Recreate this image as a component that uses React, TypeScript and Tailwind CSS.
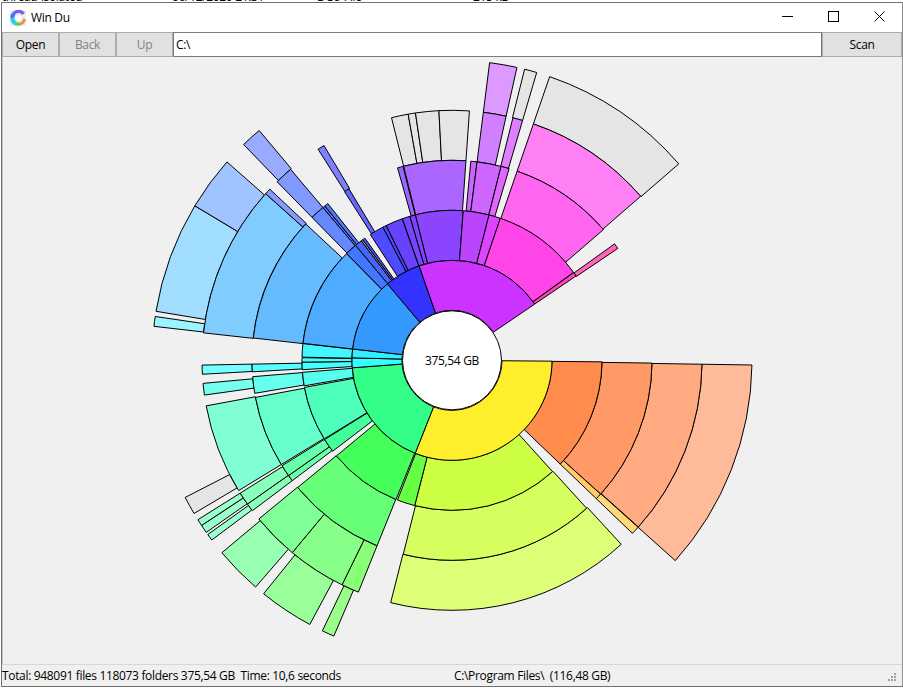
import React from 'react';

const CX = 452;
const CY = 360.3;

const pt = (r: number, a: number) => {
  const t = (a * Math.PI) / 180;
  return `${(CX + r * Math.cos(t)).toFixed(2)} ${(CY + r * Math.sin(t)).toFixed(2)}`;
};

// ring 0 = 50-100px, each ring is 50px wide. angles clockwise from east
const segPath = (ring: number, a0: number, a1: number) => {
  const r0 = 50 + ring * 50;
  const r1 = r0 + 50;
  return `M${pt(r0, a0)} L${pt(r1, a0)} A${r1} ${r1} 0 0 1 ${pt(r1, a1)} L${pt(r0, a1)} A${r0} ${r0} 0 0 0 ${pt(r0, a0)} Z`;
};

const GRAY = '#e5e5e5';

const segments: [number, number, number, string][] = [
  // orange, right side
  [4, 0.9, 41.9, '#ffbb99'],
  [3, 0.9, 41.8, '#ffaa80'],
  [2, 0.8, 42, '#ff9966'],
  [1, 0.6, 43.8, '#ff8c4d'],
  [2, 42, 43.8, '#ffcc66'],
  [3, 41.9, 43.8, '#ffd877'],
  // yellow green
  [3, 47.4, 104.2, '#ddff77'],
  [2, 47.7, 104.1, '#d4ff5e'],
  [1, 47.9, 104.4, '#ccff44'],
  [1, 104.4, 111.3, '#66ff44'],
  // green
  [4, 113.2, 115.6, '#99ff88'],
  [4, 118.3, 128.9, '#99ff99'],
  [4, 130.9, 140.1, '#99ffb3'],
  [3, 112, 116.1, '#88ff77'],
  [3, 116.1, 129.7, '#88ff88'],
  [3, 129.7, 140.6, '#80ff99'],
  [2, 112, 140.5, '#66ff77'],
  [1, 111.9, 140.4, '#44ff5a'],
  // teal slices
  [4, 143.2, 144.5, '#99ffcc'],
  [4, 145, 146.6, '#99ffcc'],
  [4, 146.6, 147.9, '#99ffcc'],
  [3, 143, 144.9, '#88ffbb'],
  [3, 144.9, 147.9, '#88ffbb'],
  [2, 143, 144.8, '#66ffaa'],
  [2, 144.8, 148.2, '#66ffaa'],
  [1, 142.7, 148.1, '#44ff99'],
  [4, 149.3, 152.8, GRAY],
  [3, 148.6, 169.5, '#80ffd5'],
  [2, 148.6, 169.3, '#66ffcc'],
  [1, 148.4, 169.6, '#4dffbb'],
  [3, 172, 174.7, '#77ffee'],
  [2, 170.5, 175.3, '#66ffee'],
  [1, 170.2, 175.4, '#55ffee'],
  // cyan
  [3, 176.8, 178.9, '#77ffff'],
  [2, 176.7, 178.9, '#55ffff'],
  [1, 176.4, 179.3, '#44ffff'],
  [1, 179.3, 181, '#44ffff'],
  [1, 181.2, 186.4, '#44f5ff'],
  // blue
  [4, 186.5, 188.4, '#99f5ff'],
  [4, 189.4, 211, '#a0ddff'],
  [4, 211, 221.4, '#a0c4ff'],
  [3, 186.3, 221.8, '#80ccff'],
  [3, 221.8, 223.2, '#8899ff'],
  [2, 186.4, 223, '#66bbff'],
  [1, 186.5, 225.3, '#4dacff'],
  [4, 226, 230, '#99aaff'],
  [3, 225.6, 229.8, '#8099ff'],
  [2, 225.6, 229.8, '#6688ff'],
  [2, 229.8, 230.5, '#5577ff'],
  [2, 230.5, 231.6, '#5577ff'],
  [1, 225.4, 230, '#4477ff'],
  [1, 230, 232.8, '#4466ff'],
  [1, 232.8, 233.5, '#a8a8a8'],
  [1, 233.5, 234.5, '#4455ff'],
  [3, 237.6, 239.2, '#8080ff'],
  [2, 237.5, 239, '#6666ff'],
  [1, 237, 242.6, '#4d4dff'],
  [1, 242.6, 244, '#5544ff'],
  [1, 244, 250.6, '#6644ff'],
  [1, 250.7, 253.7, '#7744ff'],
  [1, 253.7, 255.9, '#7f44ff'],
  // purple
  [3, 256, 259.9, GRAY],
  [3, 259.9, 261.6, GRAY],
  [3, 261.6, 267, GRAY],
  [3, 267, 274, GRAY],
  [2, 254.2, 255.8, '#9966ff'],
  [2, 256, 274, '#aa66ff'],
  [1, 255.9, 274.3, '#8c44ff'],
  [4, 277.2, 282.5, '#dd99ff'],
  [3, 277.2, 282.5, '#d080ff'],
  [2, 275.4, 277.2, '#c866ff'],
  [2, 277.2, 284.2, '#cc66ff'],
  [1, 274.3, 284.3, '#bb44ff'],
  [4, 284, 286.4, GRAY],
  [3, 284.1, 286.4, '#dd80ff'],
  [2, 284.2, 286.6, '#e066ff'],
  [1, 284.3, 288.8, '#dd44ff'],
  // magenta
  [4, 289, 319.1, GRAY],
  [3, 289, 319, '#ff80f5'],
  [2, 289, 319.2, '#ff66f0'],
  [1, 288.8, 324.1, '#ff44e8'],
  [2, 324.4, 326, '#ff66bb'],
  [1, 324.2, 325.8, '#ff44bb'],
  // first ring
  [0, 0.5, 111.6, '#ffee2b'],
  [0, 111.6, 175.7, '#33ff88'],
  [0, 175.7, 181.4, '#33ffff'],
  [0, 181.4, 186.5, '#33eeff'],
  [0, 186.5, 229.8, '#3399ff'],
  [0, 229.8, 250.8, '#3333ff'],
  [0, 250.8, 325.8, '#cc33ff'],
];

const AppIcon = () => (
  <svg width="16" height="16" viewBox="0 0 16 16" fill="none">
    <rect width="16" height="16" fill="#ececf0" />
    <path d="M4 3.4A6 6 0 0 1 13.5 4" stroke="#7a5cf0" strokeWidth="3.4" />
    <path d="M4 3.4A6 6 0 0 0 2.4 8" stroke="#3a78f0" strokeWidth="4" />
    <path d="M2.4 8A6 6 0 0 0 5.5 13.4" stroke="#22d0e8" strokeWidth="4" />
    <path d="M5.5 13.4A6 6 0 0 0 10 14" stroke="#5ccc50" strokeWidth="3.2" />
    <path d="M10 14A6 6 0 0 0 14.5 9" stroke="#f09030" strokeWidth="2.8" />
    <rect x="6.5" y="6" width="5" height="4.5" fill="#ffffff" />
  </svg>
);

const ToolButton = ({ label, disabled, className }: { label: string; disabled?: boolean; className: string }) => (
  <button
    className={`h-[25px] bg-[#e1e1e1] border border-[#adadad] text-xs ${disabled ? 'text-[#838383]' : 'text-black'} ${className}`}
  >
    {label}
  </button>
);

const App: React.FC = () => {
  return (
    <div className="w-[903px] h-[688px] flex flex-col bg-white overflow-hidden font-['Open_Sans',sans-serif] text-xs tracking-[-0.33px] text-black">
      {/* what is left of the window behind */}
      <div className="h-[2px] shrink-0 overflow-hidden flex text-xs leading-none whitespace-nowrap">
        <span className="ml-[2px] w-[170px] -mt-[9px]">thread-isolated</span>
        <span className="w-[145px] -mt-[9px]">06/12/2020 21:31</span>
        <span className="w-[156px] -mt-[9px]">DCU File</span>
        <span className="-mt-[9px]">215 kB</span>
      </div>

      <div className="ml-[1px] w-[902px] h-[685px] flex flex-col border border-[#707070] border-r-[#909090] bg-white">
        {/* Title bar */}
        <div className="h-[29px] flex items-center pl-[8px] shrink-0">
          <AppIcon />
          <span className="ml-[5px] text-xs">Win Du</span>
          <div className="ml-auto flex items-center pb-[2px]">
            <div className="w-[46px] flex justify-center">
              <svg width="11" height="11" viewBox="0 0 11 11" shapeRendering="crispEdges"><rect x="0" y="5" width="11" height="1" fill="#000" /></svg>
            </div>
            <div className="w-[46px] flex justify-center">
              <svg width="11" height="11" viewBox="0 0 11 11" shapeRendering="crispEdges" fill="none"><rect x="0.5" y="0.5" width="10" height="10" stroke="#000" /></svg>
            </div>
            <div className="w-[46px] flex justify-center">
              <svg width="11" height="11" viewBox="0 0 11 11" fill="none"><path d="M0.5 0.5L10.5 10.5M10.5 0.5L0.5 10.5" stroke="#000" /></svg>
            </div>
          </div>
        </div>

        {/* Toolbar */}
        <div className="flex h-[25px] shrink-0 bg-[#f0f0f0]">
          <ToolButton label="Open" className="w-[57px]" />
          <ToolButton label="Back" disabled className="w-[57px]" />
          <ToolButton label="Up" disabled className="w-[57px]" />
          <div className="w-[649px] h-[25px] bg-white border border-[#7a7a7a] px-[2px] flex items-center text-xs">C:\</div>
          <ToolButton label="Scan" className="flex-1" />
        </div>

        {/* Sunburst */}
        <div className="flex-1 min-h-0 bg-[#f0f0f0] border-l border-[#c8c8c8]">
          <svg width="899" height="607" viewBox="3 57 899 607" className="block">
            {segments.map(([ring, a0, a1, fill], i) => (
              <path key={i} d={segPath(ring, a0, a1)} fill={fill} stroke="#000" strokeWidth="1" />
            ))}
            <circle cx={CX} cy={CY} r="49.5" fill="#fff" stroke="#000" strokeWidth="1" />
            <text x={CX} y={CY + 4.5} textAnchor="middle" fontSize="12" fill="#000">375,54 GB</text>
          </svg>
        </div>

        {/* Status bar */}
        <div className="h-[22px] shrink-0 bg-[#f0f0f0] border-t border-[#d7d7d7] flex items-center text-xs relative">
          <span className="w-[452px] whitespace-pre">Total: 948091 files 118073 folders 375,54 GB  Time: 10,6 seconds</span>
          <span className="whitespace-pre">C:\Program Files\  (116,48 GB)</span>
          <svg className="absolute right-[5px] bottom-[4px]" width="10" height="10" viewBox="0 0 10 10" fill="#a0a0a0">
            <rect x="7" y="1" width="2" height="2" />
            <rect x="4" y="4" width="2" height="2" />
            <rect x="7" y="4" width="2" height="2" />
            <rect x="1" y="7" width="2" height="2" />
            <rect x="4" y="7" width="2" height="2" />
            <rect x="7" y="7" width="2" height="2" />
          </svg>
        </div>
      </div>
    </div>
  );
};

export default App;
